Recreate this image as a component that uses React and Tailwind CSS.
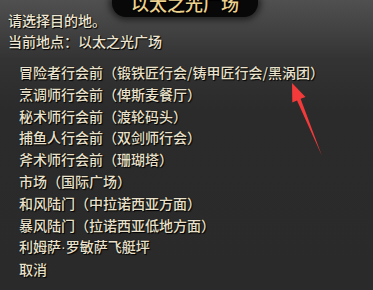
const Dot = () => <span style={{ fontFamily: '"Liberation Sans", sans-serif' }}>·</span>;

const items = [
  "冒险者行会前（锻铁匠行会/铸甲匠行会/黑涡团）",
  "烹调师行会前（俾斯麦餐厅）",
  "秘术师行会前（渡轮码头）",
  "捕鱼人行会前（双剑师行会）",
  "斧术师行会前（珊瑚塔）",
  "市场（国际广场）",
  "和风陆门（中拉诺西亚方面）",
  "暴风陆门（拉诺西亚低地方面）",
  <>利姆萨<Dot />罗敏萨飞艇坪</>,
  "取消",
];

function Arrow() {
  return (
    <svg className="absolute left-0 top-0 pointer-events-none" width="373" height="290" viewBox="0 0 373 290">
      <polygon
        points="292,83 305.5,97 300.6,98.8 322,156 297,100.4 292.3,102.5"
        fill="#f23a3a"
      />
    </svg>
  );
}

export default function App() {
  return (
    <div
      className="relative w-[373px] h-[290px] overflow-hidden bg-[linear-gradient(to_bottom,#505050_0px,#333333_60px,#2b2b2b_110px,#2a2a2a_100%)] text-[#eee6d2] text-[14px] font-medium [text-shadow:0_0_1px_rgba(0,0,0,0.9),1px_1px_1px_#000]"
      style={{ fontFamily: '"Noto Sans CJK SC", "Noto Sans", sans-serif' }}
    >
      {/* title tab */}
      <div className="absolute left-[112px] top-0 w-[146px] h-[17px] rounded-b-[14px] bg-[#080808] shadow-[0_0_6px_3px_rgba(0,0,0,0.55)] flex justify-center overflow-hidden">
        <span className="block mt-[-6px] text-[18px] leading-[18px] text-[#ecd28e]">以太之光广场</span>
      </div>

      <div className="px-[8px] pt-[10px]">
        <div className="leading-[21px]">
          <div>请选择目的地。</div>
          <div>当前地点：以太之光广场</div>
        </div>
        <ul className="mt-[10px] pl-[11px] leading-[21.8px] text-[#e9e1cb]">
          {items.map((t, i) => (
            <li key={i} className="whitespace-nowrap">{t}</li>
          ))}
        </ul>
      </div>

      <Arrow />
    </div>
  );
}
